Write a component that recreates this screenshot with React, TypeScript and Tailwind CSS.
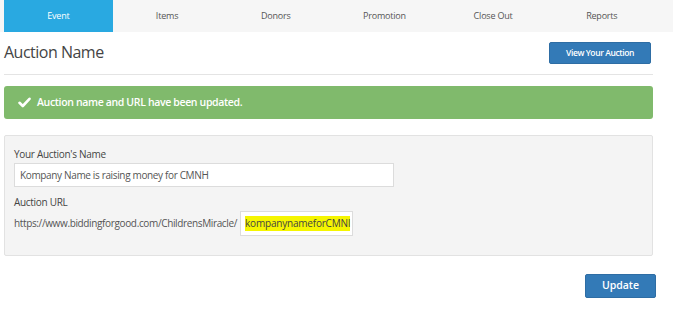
import { useState } from "react";

const tabs = ["Event", "Items", "Donors", "Promotion", "Close Out", "Reports"];

export default function App() {
  const [active] = useState("Event");
  const [name, setName] = useState("Kompany Name is raising money for CMNH");

  return (
    <main className="min-h-[315px] w-[673px] bg-white font-['Open_Sans',sans-serif] text-[#444]">
      <nav className="flex h-8 bg-[#f6f6f6] pl-1">
        {tabs.map((t) => (
          <div
            key={t}
            className={`flex w-[108.7px] items-center justify-center text-[9px] tracking-[-0.2px] ${
              t === active ? "bg-[#29a9e1] text-white" : "text-[#555]"
            }`}
          >
            {t}
          </div>
        ))}
      </nav>

      <div className="w-[653px] pl-1">
        <div className="flex h-[43px] items-end justify-between border-b border-[#e4e4e4] pb-[10px]">
          <h1 className="text-[16px] leading-6 tracking-[-0.5px] text-[#444]">Auction Name</h1>
          <button className="mr-[2px] h-[22px] w-[102px] rounded-[2px] border border-[#2e6da4] bg-[#337ab7] text-[8.5px] font-semibold tracking-[-0.4px] text-white">
            View Your Auction
          </button>
        </div>

        <div className="mt-[11px] flex h-[33px] items-center gap-[6px] rounded-[3px] bg-[#80ba6c] pl-[14px] text-[10.5px] font-semibold tracking-[-0.35px] text-white">
          <svg width="13" height="11" viewBox="0 0 13 11" fill="none">
            <path d="M1.5 5.8 L4.8 9 L11.5 1.8" stroke="white" strokeWidth="2.6" strokeLinecap="round" strokeLinejoin="round" />
          </svg>
          Auction name and URL have been updated.
        </div>

        <section className="mt-4 h-[121px] rounded-[2px] border border-[#e2e2e2] bg-[#f4f4f4] px-[9px] pt-[10px] text-[10px] tracking-[-0.3px]">
          <label className="block leading-4 text-[#444]">Your Auction's Name</label>
          <input
            value={name}
            onChange={(e) => setName(e.target.value)}
            className="mt-[1px] h-[24px] w-[380px] border border-[#dcdcdc] bg-white px-[5px] text-[10px] tracking-[-0.35px] text-[#555] outline-none"
          />
          <label className="mt-[7px] block leading-4 text-[#444]">Auction URL</label>
          <div className="mt-[1px] flex items-center gap-[3px]">
            <span className="tracking-[-0.36px] text-[#555]">https://www.biddingforgood.com/ChildrensMiracle/</span>
            <div className="flex h-[25px] w-[113px] items-center overflow-hidden border border-[#dcdcdc] bg-white px-[4px]">
              <span className="whitespace-nowrap bg-[#f5f500] text-[10px] tracking-[-0.2px] text-[#444]">kompanynameforCMNI</span>
            </div>
          </div>
        </section>

        <div className="mt-[18px] flex justify-end">
          <button className="mr-[-3px] h-[24px] w-[71px] rounded-[2px] border border-[#2e6da4] bg-[#337ab7] text-[10.5px] font-semibold text-white">
            Update
          </button>
        </div>
      </div>
    </main>
  );
}
